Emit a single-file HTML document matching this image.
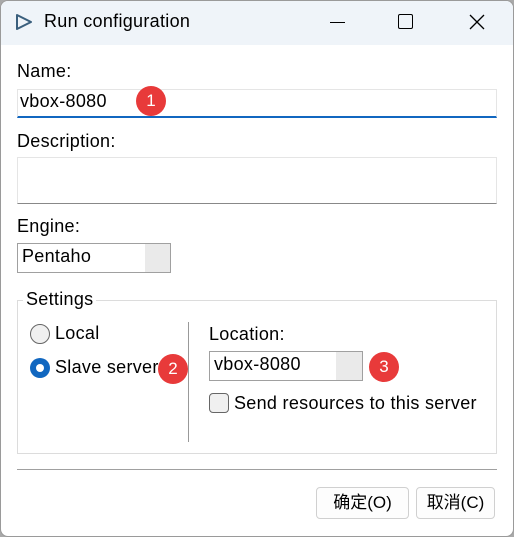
<!DOCTYPE html>
<html><head><meta charset="utf-8"><style>
*{box-sizing:border-box;margin:0;padding:0}
body{width:514px;height:537px;background:#a9a9a9;font-family:"Liberation Sans","Noto Sans CJK SC",sans-serif;font-size:18px;letter-spacing:0.3px;color:#000;position:relative;overflow:hidden}
.win{position:absolute;left:0;top:0;width:514px;height:537px;background:#fff;border-radius:8px;border:1px solid #9a9a9a}
.tb{position:absolute;left:1px;top:1px;width:512px;height:44px;background:#eff4f9;border-radius:7px 7px 0 0}
.a{position:absolute;white-space:nowrap}
.badge{position:absolute;width:30px;height:30px;border-radius:50%;background:#e83a3a;color:#fff;font-size:17px;text-align:center;line-height:30px;letter-spacing:0}
.btn{position:absolute;height:32px;border:1px solid #d0d0d0;border-radius:4px;background:#fdfdfd;text-align:center;line-height:30px;font-size:17px;letter-spacing:0}
</style></head><body><div class="win"></div>
<div class="tb"></div>
<svg class="a" style="left:14px;top:13px" width="20" height="18"><path d="M3 2 L17 9 L3 16 Z" fill="none" stroke="#3a5f7d" stroke-width="2" stroke-linejoin="round"/></svg>
<div class="a" style="left:44px;top:11px;font-size:18px">Run configuration</div>
<div class="a" style="left:330px;top:22px;width:15px;height:1px;background:#000"></div>
<div class="a" style="left:398px;top:14px;width:15px;height:15px;border:1.5px solid #000;border-radius:2px"></div>
<svg class="a" style="left:469px;top:14px" width="16" height="16"><path d="M1 1L15 15M15 1L1 15" stroke="#000" stroke-width="1.3"/></svg>

<div class="a" style="left:17px;top:61px">Name:</div>
<div class="a" style="left:17px;top:89px;width:480px;height:29px;border:1px solid #e5e5e5;border-bottom:2px solid #1167c0"></div>
<div class="a" style="left:20px;top:91px">vbox-8080</div>
<div class="badge" style="left:136px;top:86px">1</div>

<div class="a" style="left:17px;top:131px">Description:</div>
<div class="a" style="left:17px;top:157px;width:480px;height:47px;border:1px solid #e5e5e5;border-bottom:1px solid #888"></div>

<div class="a" style="left:17px;top:216px">Engine:</div>
<div class="a" style="left:17px;top:243px;width:154px;height:30px;border:1px solid #a0a0a0;background:#fff"><div class="a" style="right:0;top:0;width:25px;height:28px;background:#eaeaea"></div></div>
<div class="a" style="left:22px;top:246px">Pentaho</div>

<div class="a" style="left:17px;top:300px;width:480px;height:154px;border:1px solid #dcdcdc"></div>
<div class="a" style="left:23px;top:289px;background:#fff;padding:0 3px">Settings</div>
<div class="a" style="left:30px;top:324px;width:20px;height:20px;border-radius:50%;border:1px solid #666;background:#f0f0f0"></div>
<div class="a" style="left:55px;top:323px">Local</div>
<div class="a" style="left:30px;top:358px;width:20px;height:20px;border-radius:50%;background:#1167c0"><div class="a" style="left:6px;top:6px;width:8px;height:8px;border-radius:50%;background:#fff"></div></div>
<div class="a" style="left:55px;top:357px">Slave server</div>
<div class="badge" style="left:158px;top:354px">2</div>
<div class="a" style="left:188px;top:322px;width:1px;height:120px;background:#999"></div>

<div class="a" style="left:209px;top:324px">Location:</div>
<div class="a" style="left:209px;top:351px;width:154px;height:30px;border:1px solid #a0a0a0;background:#fff"><div class="a" style="right:0;top:0;width:26px;height:28px;background:#eaeaea"></div></div>
<div class="a" style="left:214px;top:354px">vbox-8080</div>
<div class="badge" style="left:369px;top:352px">3</div>
<div class="a" style="left:209px;top:393px;width:20px;height:20px;border:1px solid #666;border-radius:4px;background:#f0f0f0"></div>
<div class="a" style="left:234px;top:393px">Send resources to this server</div>

<div class="a" style="left:17px;top:469px;width:480px;height:1px;background:#a0a0a0"></div>
<div class="btn" style="left:316px;top:487px;width:93px">确定(O)</div>
<div class="btn" style="left:416px;top:487px;width:79px">取消(C)</div>
</body></html>
